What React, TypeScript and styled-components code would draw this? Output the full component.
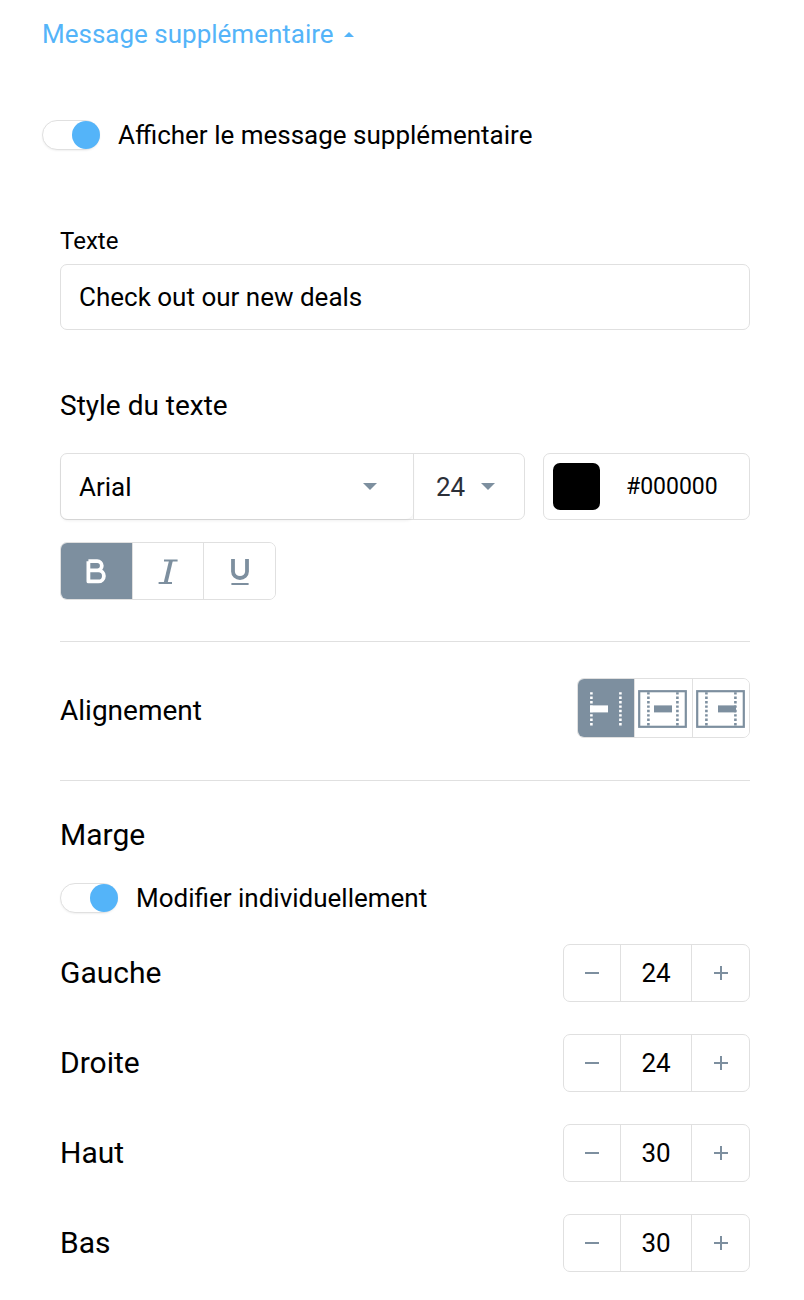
import React, { useState } from "react";
import styled, { createGlobalStyle } from "styled-components";

const line = "#e0e0e0";
const slate = "#7d8f9f";
const blue = "#54b4f9";
const radius = "7px";

const GlobalStyle = createGlobalStyle`
  *, *::before { box-sizing: border-box; }
  body {
    margin: 0;
    background: #fff;
    color: #000;
    font-family: Roboto, "Liberation Sans", sans-serif;
    font-size: 26px;
    line-height: 32px;
  }
  button, input, select {
    font: inherit;
    color: inherit;
    margin: 0;
    padding: 0;
  }
  button { cursor: pointer; }
`;

const Panel = styled.main`
  padding: 18px 54px 28px 42px;
`;

const SectionToggle = styled.button`
  display: flex;
  align-items: center;
  gap: 10px;
  border: 0;
  background: none;
  color: ${blue};
`;

const SectionBody = styled.div`
  display: flex;
  flex-direction: column;
  padding-left: 18px;
`;

const SwitchRow = styled.label<{ $spaced?: boolean }>`
  display: flex;
  align-items: center;
  gap: 18px;
  margin: ${(p) => (p.$spaced ? "69px 0 74px" : "31px 0 30px")};
`;

const SwitchInput = styled.input`
  appearance: none;
  flex: none;
  width: 58px;
  height: 30px;
  border: 1px solid ${line};
  border-radius: 15px;
  background: #fff;
  box-shadow: 0 1px 2px rgba(0, 0, 0, 0.06);

  &::before {
    content: "";
    display: block;
    width: 28px;
    height: 28px;
    border-radius: 50%;
    background: ${slate};
  }
  &:checked::before {
    margin-left: 29px;
    background: ${blue};
  }
`;

const FieldLabel = styled.label`
  font-size: 24px;
  margin-bottom: 7px;
`;

const TextField = styled.input`
  width: 100%;
  height: 66px;
  padding: 0 18px;
  border: 1px solid ${line};
  border-radius: ${radius};
  background: #fff;
`;

const Heading = styled.h2`
  margin: 0;
  font-size: 28px;
  font-weight: 400;
  line-height: 32px;
`;

const StyleHeading = styled(Heading)`
  margin: 60px 0 31px;
`;

const FontRow = styled.div`
  display: flex;
  gap: 18px;
  margin-bottom: 22px;
`;

const SelectGroup = styled.div`
  display: flex;
  flex: 1;
  min-width: 0;
  height: 67px;
  border: 1px solid ${line};
  border-radius: ${radius};
`;

const SelectCell = styled.div<{ $compact?: boolean }>`
  display: grid;
  align-items: center;
  flex: ${(p) => (p.$compact ? "0 0 111px" : "1")};
  border-left: ${(p) => (p.$compact ? `1px solid ${line}` : "0")};
  border-radius: ${(p) => (p.$compact ? "0" : radius)};
  color: ${(p) => (p.$compact ? "#2b2f38" : "#000")};
  box-shadow: ${(p) => (p.$compact ? "none" : "0 2px 3px rgba(0, 0, 0, 0.06)")};

  select {
    grid-area: 1 / 1;
    appearance: none;
    width: 100%;
    height: 100%;
    padding-left: ${(p) => (p.$compact ? "22px" : "18px")};
    border: 0;
    background: none;
  }
  svg {
    grid-area: 1 / 1;
    justify-self: end;
    margin-right: ${(p) => (p.$compact ? "29px" : "36px")};
    pointer-events: none;
  }
`;

const ColorField = styled.div`
  display: flex;
  align-items: center;
  flex: 0 0 207px;
  min-width: 0;
  height: 67px;
  padding: 0 9px;
  border: 1px solid ${line};
  border-radius: ${radius};
`;

const Swatch = styled.button<{ $color: string }>`
  flex: none;
  width: 47px;
  height: 47px;
  border: 0;
  border-radius: ${radius};
  background: ${(p) => p.$color};
`;

const HexInput = styled.input`
  flex: 1;
  width: 0;
  min-width: 0;
  margin-left: 26px;
  border: 0;
  background: none;
  font-size: 23px;
`;

const ButtonGroup = styled.div<{ $wide?: boolean }>`
  display: flex;
  align-self: flex-start;
  width: ${(p) => (p.$wide ? "216px" : "173px")};
  height: ${(p) => (p.$wide ? "58px" : "60px")};
  overflow: hidden;
  border: 1px solid ${line};
  border-radius: ${radius};
`;

const GroupButton = styled.button`
  display: flex;
  align-items: center;
  justify-content: center;
  flex: 1;
  border: 0;
  background: #fff;
  color: ${slate};

  & + & { border-left: 1px solid ${line}; }
  &[aria-pressed="true"] {
    background: ${slate};
    color: #fff;
  }
`;

const Divider = styled.hr`
  width: 100%;
  height: 1px;
  margin: 0;
  border: 0;
  background: ${line};
`;

const StyleDivider = styled(Divider)`
  margin-top: 41px;
`;

const SettingRow = styled.div`
  display: flex;
  align-items: center;
  justify-content: space-between;
`;

const AlignRow = styled(SettingRow)`
  padding: 36px 0 42px;

  ${Heading} { padding-top: 6px; }
`;

const MarginHeading = styled(Heading)`
  margin-top: 38px;
  font-size: 30px;
`;

const MarginList = styled.div`
  display: flex;
  flex-direction: column;
  gap: 32px;
`;

const MarginLabel = styled.label`
  font-size: 30px;
`;

const StepperBox = styled.div`
  display: grid;
  grid-template-columns: 56px 72px 1fr;
  width: 187px;
  height: 58px;
  border: 1px solid ${line};
  border-radius: ${radius};
  color: ${slate};
`;

const StepButton = styled.button`
  display: flex;
  align-items: center;
  justify-content: center;
  border: 0;
  background: none;
`;

const StepInput = styled.input`
  min-width: 0;
  border: solid ${line};
  border-width: 0 1px;
  background: none;
  color: #000;
  text-align: center;
`;

const Caret = ({ up = false }: { up?: boolean }) =>
  up ? (
    <svg width="10" height="5" viewBox="0 0 10 5" fill="currentColor" aria-hidden="true">
      <path d="M0 5L5 0L10 5Z" />
    </svg>
  ) : (
    <svg width="14" height="7" viewBox="0 0 14 7" fill={slate} aria-hidden="true">
      <path d="M0 0H14L7 7Z" />
    </svg>
  );

const BoldIcon = () => (
  <svg width="22" height="28" viewBox="0 0 22 28" fill="none" stroke="currentColor" strokeWidth="3.8" strokeLinejoin="round" aria-hidden="true">
    <path d="M3.4 4.2H12.2A4.5 4.5 0 0 1 12.2 13.4H3.4M12.2 13.4H13.4A5 5 0 0 1 13.4 24.4H3.4V4.2" />
  </svg>
);

const ItalicIcon = () => (
  <svg width="22" height="28" viewBox="0 0 22 28" fill="none" stroke="currentColor" aria-hidden="true">
    <path d="M7 3.4H20.6M1.6 26H15" strokeWidth="2" />
    <path d="M14 3.4L8.6 26" strokeWidth="3.8" />
  </svg>
);

const UnderlineIcon = () => (
  <svg width="20" height="28" viewBox="0 0 20 28" fill="none" stroke="currentColor" aria-hidden="true">
    <path d="M3 2V14.4A7 6.6 0 0 0 17 14.4V2" strokeWidth="3.8" />
    <path d="M1.4 27H18.6" strokeWidth="2" />
  </svg>
);

type Align = "left" | "center" | "right";

const AlignIcon = ({ align, framed }: { align: Align; framed: boolean }) => {
  const barX = { left: 9, center: 16, right: 22 }[align];
  return (
    <svg width="50" height="40" viewBox="0 0 50 40" fill="none" stroke="currentColor" aria-hidden="true">
      {framed && <rect x="1.2" y="3.2" width="46.6" height="35.6" strokeWidth="2.2" />}
      <path d="M10.4 4.2V37.6M39.4 4.2V37.6" strokeWidth="2.6" strokeDasharray="2.4 2" />
      <rect x={barX} y="17.4" width="18" height="7" fill="currentColor" stroke="none" />
    </svg>
  );
};

const Stepper = ({ label, id, initial }: { label: string; id: string; initial: number }) => {
  const [value, setValue] = useState(initial);
  return (
    <SettingRow>
      <MarginLabel htmlFor={id}>{label}</MarginLabel>
      <StepperBox>
        <StepButton type="button" aria-label={`Diminuer ${label}`} onClick={() => setValue(value - 1)}>
          <svg width="14" height="14" viewBox="0 0 14 14" stroke="currentColor" strokeWidth="2" aria-hidden="true">
            <path d="M0 7H14" />
          </svg>
        </StepButton>
        <StepInput
          id={id}
          type="text"
          inputMode="numeric"
          value={value}
          onChange={(e) => setValue(Number(e.target.value) || 0)}
        />
        <StepButton type="button" aria-label={`Augmenter ${label}`} onClick={() => setValue(value + 1)}>
          <svg width="14" height="14" viewBox="0 0 14 14" stroke="currentColor" strokeWidth="2" aria-hidden="true">
            <path d="M0 7H14M7 0V14" />
          </svg>
        </StepButton>
      </StepperBox>
    </SettingRow>
  );
};

const formats = [
  { key: "bold", label: "Gras", Icon: BoldIcon },
  { key: "italic", label: "Italique", Icon: ItalicIcon },
  { key: "underline", label: "Souligné", Icon: UnderlineIcon },
];

const alignments: { key: Align; label: string }[] = [
  { key: "left", label: "Aligner à gauche" },
  { key: "center", label: "Centrer" },
  { key: "right", label: "Aligner à droite" },
];

const margins = [
  { id: "margin-left", label: "Gauche", initial: 24 },
  { id: "margin-right", label: "Droite", initial: 24 },
  { id: "margin-top", label: "Haut", initial: 30 },
  { id: "margin-bottom", label: "Bas", initial: 30 },
];

export default function App() {
  const [active, setActive] = useState<string[]>(["bold"]);
  const [align, setAlign] = useState<Align>("left");
  const [color, setColor] = useState("#000000");

  const toggleFormat = (key: string) =>
    setActive(active.includes(key) ? active.filter((k) => k !== key) : [...active, key]);

  return (
    <>
      <GlobalStyle />
      <Panel>
        <SectionToggle type="button" aria-expanded="true">
          Message supplémentaire
          <Caret up />
        </SectionToggle>

        <SwitchRow $spaced>
          <SwitchInput type="checkbox" role="switch" defaultChecked />
          Afficher le message supplémentaire
        </SwitchRow>

        <SectionBody>
          <FieldLabel htmlFor="message">Texte</FieldLabel>
          <TextField id="message" type="text" defaultValue="Check out our new deals" />

          <StyleHeading>Style du texte</StyleHeading>
          <FontRow>
            <SelectGroup>
              <SelectCell>
                <select aria-label="Police" defaultValue="Arial">
                  <option>Arial</option>
                  <option>Roboto</option>
                </select>
                <Caret />
              </SelectCell>
              <SelectCell $compact>
                <select aria-label="Taille" defaultValue="24">
                  <option>18</option>
                  <option>24</option>
                  <option>30</option>
                </select>
                <Caret />
              </SelectCell>
            </SelectGroup>
            <ColorField>
              <Swatch type="button" aria-label="Choisir une couleur" $color={color} />
              <HexInput aria-label="Couleur" value={color} onChange={(e) => setColor(e.target.value)} />
            </ColorField>
          </FontRow>

          <ButtonGroup $wide role="group" aria-label="Format">
            {formats.map(({ key, label, Icon }) => (
              <GroupButton
                key={key}
                type="button"
                aria-label={label}
                aria-pressed={active.includes(key)}
                onClick={() => toggleFormat(key)}
              >
                <Icon />
              </GroupButton>
            ))}
          </ButtonGroup>

          <StyleDivider />
          <AlignRow>
            <Heading>Alignement</Heading>
            <ButtonGroup role="group" aria-label="Alignement">
              {alignments.map(({ key, label }) => (
                <GroupButton
                  key={key}
                  type="button"
                  aria-label={label}
                  aria-pressed={align === key}
                  onClick={() => setAlign(key)}
                >
                  <AlignIcon align={key} framed={align !== key} />
                </GroupButton>
              ))}
            </ButtonGroup>
          </AlignRow>
          <Divider />

          <MarginHeading>Marge</MarginHeading>
          <SwitchRow>
            <SwitchInput type="checkbox" role="switch" defaultChecked />
            Modifier individuellement
          </SwitchRow>
          <MarginList>
            {margins.map((m) => (
              <Stepper key={m.id} {...m} />
            ))}
          </MarginList>
        </SectionBody>
      </Panel>
    </>
  );
}
